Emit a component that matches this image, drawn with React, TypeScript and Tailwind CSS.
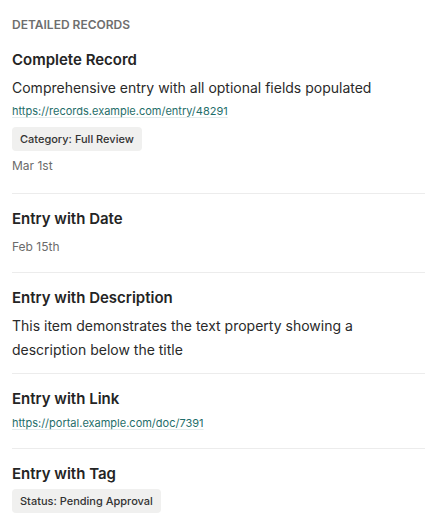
import React from 'react';

type Entry = {
  title: string;
  text?: string;
  link?: string;
  tag?: string;
  date?: string;
};

const entries: Entry[] = [
  {
    title: 'Complete Record',
    text: 'Comprehensive entry with all optional fields populated',
    link: 'https://records.example.com/entry/48291',
    tag: 'Category: Full Review',
    date: 'Mar 1st',
  },
  { title: 'Entry with Date', date: 'Feb 15th' },
  {
    title: 'Entry with Description',
    text: 'This item demonstrates the text property showing a description below the title',
  },
  { title: 'Entry with Link', link: 'https://portal.example.com/doc/7391' },
  { title: 'Entry with Tag', tag: 'Status: Pending Approval' },
];

const App = () => {
  return (
    <div className="min-h-screen bg-white px-3 font-['Inter',sans-serif] text-[#242424]">
      <h2 className="pt-[17px] pb-[3px] text-[12px] leading-4 font-semibold uppercase text-[#6e6e6e]">
        Detailed Records
      </h2>
      <div className="flex flex-col">
        {entries.map((e, i) => {
          const descLast = e.text && !e.link && !e.tag && !e.date;
          const afterTitle = !e.text && !e.link;
          return (
            <div
              key={e.title}
              className={`flex flex-col ${i === 0 ? 'pt-[14px]' : 'pt-[15px]'} ${descLast ? 'pb-[11px]' : i === 0 ? 'pb-[19px]' : 'pb-[17px]'} ${i < entries.length - 1 ? 'border-b border-[#ececec]' : ''}`}
            >
              <div className="text-[15px] leading-5 font-semibold">{e.title}</div>
              {e.text && (
                <p className="mt-[6px] text-[14px] leading-6 text-[#2a2a2a]">{e.text}</p>
              )}
              {e.link && (
                <a
                  href={e.link}
                  className={`${e.text ? 'mt-[3px]' : 'mt-[6px]'} self-start text-[11px] leading-4 text-[#1f6e6a] underline decoration-[#e3ecec] underline-offset-2`}
                >
                  {e.link}
                </a>
              )}
              {e.tag && (
                <span className={`${afterTitle ? 'mt-[5px]' : 'mt-2'} self-start rounded-[4px] bg-[#f0f0ef] px-2 py-1 text-[11px] leading-4 font-medium text-[#333]`}>
                  {e.tag}
                </span>
              )}
              {e.date && (
                <span className={`${e.tag ? 'mt-[7px]' : 'mt-[10px]'} text-[12px] leading-4 text-[#6b6b6b]`}>
                  {e.date}
                </span>
              )}
            </div>
          );
        })}
      </div>
    </div>
  );
};

export default App;
